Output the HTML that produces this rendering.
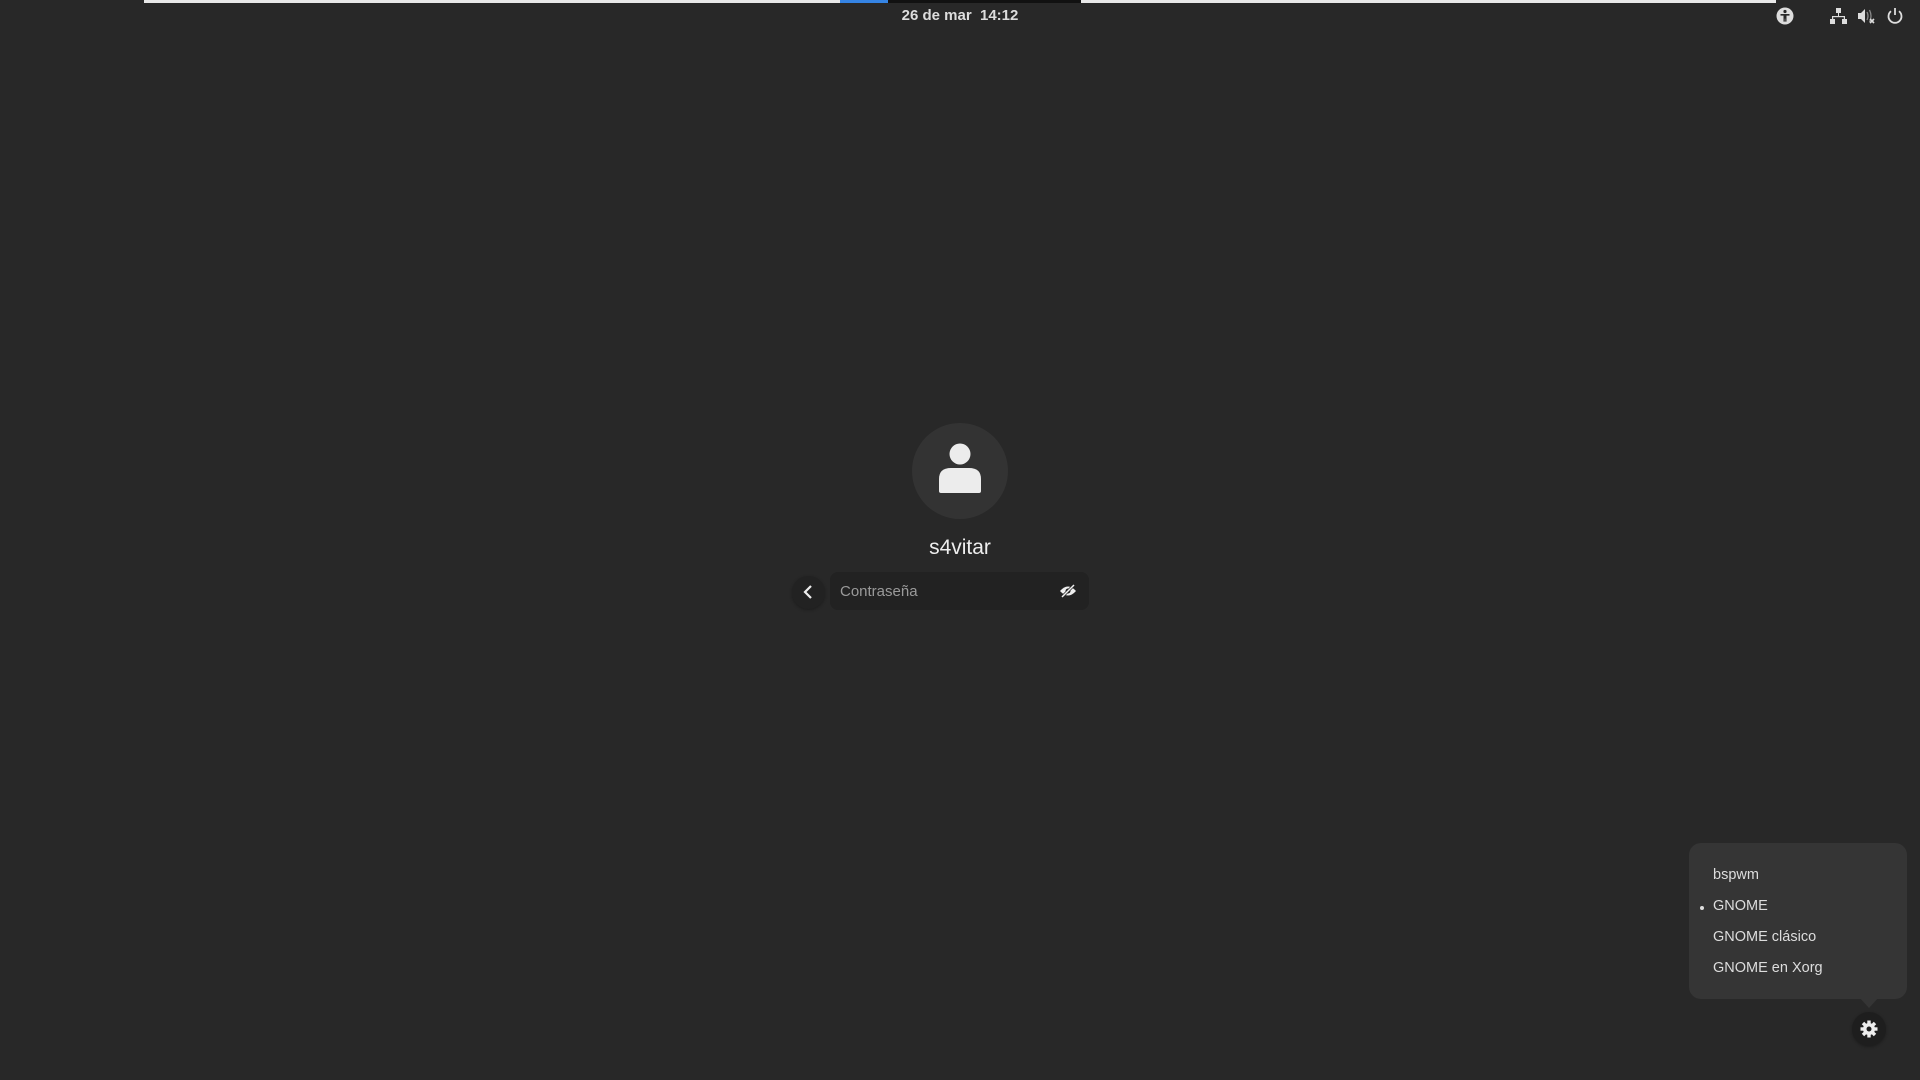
<!DOCTYPE html>
<html><head><meta charset="utf-8"><style>
*{margin:0;padding:0;box-sizing:border-box}
body{width:1920px;height:1080px;background:#282828;overflow:hidden;position:relative;font-family:"Liberation Sans","DejaVu Sans",sans-serif;color:#eee}
.abs{position:absolute}
.line{top:0;height:3px}
.date{top:7px;left:0;width:1920px;text-align:center;font-size:15px;font-weight:bold;color:#ddd}
.menu{left:1689px;top:843px;width:218px;height:156px;background:#353535;border-radius:12px}
.item{position:absolute;left:24px;font-size:14.5px;color:#ddd}
</style></head><body>
<div class="abs line" style="left:144px;width:696px;background:#e8e8e8"></div>
<div class="abs line" style="left:840px;width:48px;background:#3584e4"></div>
<div class="abs line" style="left:888px;width:193px;background:#111"></div>
<div class="abs line" style="left:1081px;width:695px;background:#e8e8e8"></div>
<div class="abs date">26 de mar&nbsp; 14:12</div>

<svg class="abs" style="left:1776px;top:7px" width="18" height="18" viewBox="0 0 18 18"><circle cx="9" cy="9" r="8.5" fill="#ddd"/><circle cx="9" cy="4.5" r="1.6" fill="#282828"/><path d="M4.5 7h9v1.6h-3v6h-1.3v-3h-0.4v3H7.5v-6h-3z" fill="#282828"/></svg>
<svg class="abs" style="left:1830px;top:8px" width="17" height="17" viewBox="0 0 17 17"><rect x="6" y="0" width="5" height="5" fill="#ddd"/><rect x="8" y="5" width="1" height="3" fill="#ddd"/><rect x="2" y="8" width="13" height="1.2" fill="#ddd"/><rect x="2" y="8" width="1.2" height="4" fill="#ddd"/><rect x="13.8" y="8" width="1.2" height="4" fill="#ddd"/><rect x="0" y="11" width="5" height="5" fill="#ddd"/><rect x="12" y="11" width="5" height="5" fill="#ddd"/></svg>
<svg class="abs" style="left:1858px;top:8px" width="18" height="17" viewBox="0 0 18 17"><path d="M0 5h3l4-4v14l-4-4H0z" fill="#ddd"/><path d="M9 4q2 4 0 8M11.5 2q3 6 0 12" stroke="#888" stroke-width="1.3" fill="none"/><path d="M12 11l4 4M16 11l-4 4" stroke="#ddd" stroke-width="1.6"/></svg>
<svg class="abs" style="left:1886px;top:7px" width="18" height="18" viewBox="0 0 18 18"><path d="M5 4.2A6.5 6.5 0 1 0 13 4.2" stroke="#ddd" stroke-width="1.8" fill="none"/><path d="M9 1v7" stroke="#ddd" stroke-width="1.8"/></svg>

<div class="abs" style="left:912px;top:423px;width:96px;height:96px;border-radius:50%;background:#333"></div>
<svg class="abs" style="left:937px;top:443px" width="46" height="52" viewBox="0 0 46 52"><circle cx="23" cy="11" r="10.5" fill="#ececec"/><path d="M2 48v-12q0-11 12-11h18q12 0 12 11v12q0 2-2 2H4q-2 0-2-2z" fill="#ececec"/></svg>
<div class="abs" style="left:0;width:1920px;top:536px;text-align:center;font-size:21px;color:#eee">s4vitar</div>

<div class="abs" style="left:792px;top:576px;width:33px;height:33px;border-radius:50%;background:#222;box-shadow:0 1px 3px rgba(0,0,0,.3)"></div>
<svg class="abs" style="left:801px;top:584px" width="14" height="16" viewBox="0 0 14 16"><path d="M10 2L4 8l6 6" stroke="#eee" stroke-width="2.2" fill="none"/></svg>
<div class="abs" style="left:830px;top:572px;width:259px;height:38px;border-radius:8px;background:#222"></div>
<div class="abs" style="left:840px;top:583px;font-size:15px;color:#9a9a9a">Contraseña</div>
<svg class="abs" style="left:1059px;top:583px" width="18" height="16" viewBox="0 0 18 16"><path d="M1 8q8-9 16 0q-8 9-16 0z" fill="#eee"/><circle cx="9" cy="8" r="2.5" fill="#222"/><path d="M3 14L15 2" stroke="#222" stroke-width="3"/><path d="M3 14L15 2" stroke="#eee" stroke-width="1.5"/></svg>

<div class="abs menu">
<div class="item" style="top:24px">bspwm</div>
<div class="item" style="top:55px">GNOME</div>
<div class="abs" style="left:11px;top:63px;width:4px;height:4px;border-radius:50%;background:#ddd"></div>
<div class="item" style="top:86px">GNOME clásico</div>
<div class="item" style="top:117px">GNOME en Xorg</div>
</div>
<div class="abs" style="left:1859px;top:997px;width:0;height:0;border-left:10px solid transparent;border-right:10px solid transparent;border-top:11px solid #353535"></div>
<div class="abs" style="left:1852px;top:1012px;width:34px;height:34px;border-radius:50%;background:#1e1e1e;box-shadow:0 1px 3px rgba(0,0,0,.3)"></div>
<svg class="abs" style="left:1860px;top:1020px" width="18" height="18" viewBox="0 0 18 18"><g fill="#eee"><circle cx="9" cy="9" r="6"/><g id="t"><rect x="7.3" y="0.5" width="3.4" height="4"/></g><use href="#t" transform="rotate(45 9 9)"/><use href="#t" transform="rotate(90 9 9)"/><use href="#t" transform="rotate(135 9 9)"/><use href="#t" transform="rotate(180 9 9)"/><use href="#t" transform="rotate(225 9 9)"/><use href="#t" transform="rotate(270 9 9)"/><use href="#t" transform="rotate(315 9 9)"/></g><circle cx="9" cy="9" r="2.5" fill="#1e1e1e"/></svg>
</body></html>
